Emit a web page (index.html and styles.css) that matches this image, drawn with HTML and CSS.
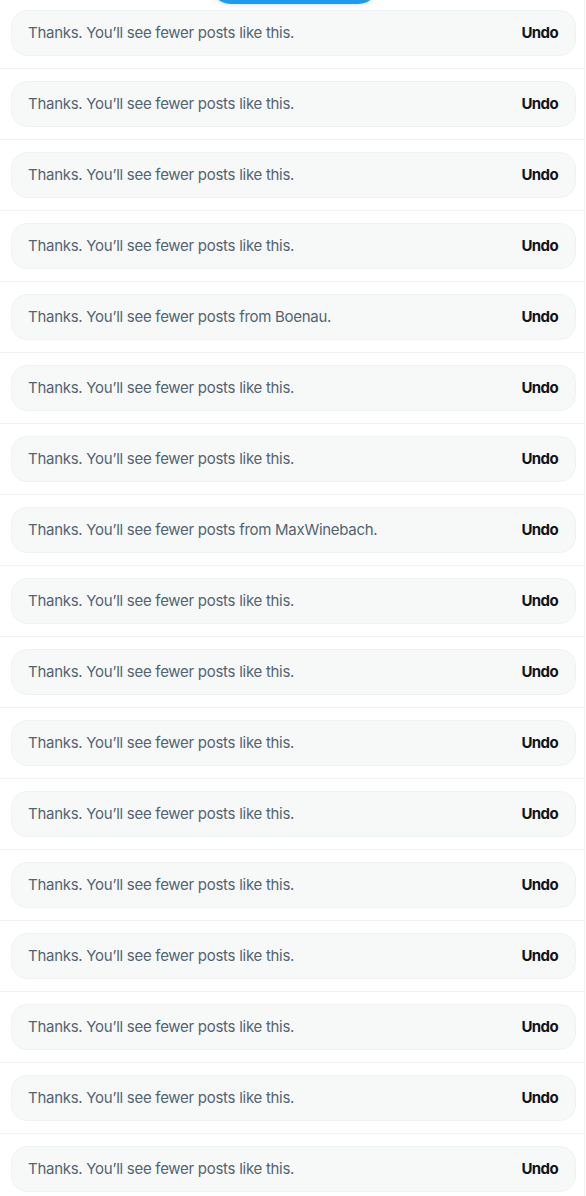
FILE: index.html
```html
<!DOCTYPE html>
<html lang="en">
<head>
<meta charset="utf-8">
<title>Timeline</title>
<link rel="stylesheet" href="styles.css">
</head>
<body>
<div class="pill" aria-label="Show new posts"></div>
<main class="timeline">
  <div class="row"><div class="notice"><span class="msg">Thanks. You’ll see fewer posts like this.</span><button class="undo">Undo</button></div></div>
  <div class="row"><div class="notice"><span class="msg">Thanks. You’ll see fewer posts like this.</span><button class="undo">Undo</button></div></div>
  <div class="row"><div class="notice"><span class="msg">Thanks. You’ll see fewer posts like this.</span><button class="undo">Undo</button></div></div>
  <div class="row"><div class="notice"><span class="msg">Thanks. You’ll see fewer posts like this.</span><button class="undo">Undo</button></div></div>
  <div class="row"><div class="notice"><span class="msg">Thanks. You’ll see fewer posts from Boenau.</span><button class="undo">Undo</button></div></div>
  <div class="row"><div class="notice"><span class="msg">Thanks. You’ll see fewer posts like this.</span><button class="undo">Undo</button></div></div>
  <div class="row"><div class="notice"><span class="msg">Thanks. You’ll see fewer posts like this.</span><button class="undo">Undo</button></div></div>
  <div class="row"><div class="notice"><span class="msg">Thanks. You’ll see fewer posts from MaxWinebach.</span><button class="undo">Undo</button></div></div>
  <div class="row"><div class="notice"><span class="msg">Thanks. You’ll see fewer posts like this.</span><button class="undo">Undo</button></div></div>
  <div class="row"><div class="notice"><span class="msg">Thanks. You’ll see fewer posts like this.</span><button class="undo">Undo</button></div></div>
  <div class="row"><div class="notice"><span class="msg">Thanks. You’ll see fewer posts like this.</span><button class="undo">Undo</button></div></div>
  <div class="row"><div class="notice"><span class="msg">Thanks. You’ll see fewer posts like this.</span><button class="undo">Undo</button></div></div>
  <div class="row"><div class="notice"><span class="msg">Thanks. You’ll see fewer posts like this.</span><button class="undo">Undo</button></div></div>
  <div class="row"><div class="notice"><span class="msg">Thanks. You’ll see fewer posts like this.</span><button class="undo">Undo</button></div></div>
  <div class="row"><div class="notice"><span class="msg">Thanks. You’ll see fewer posts like this.</span><button class="undo">Undo</button></div></div>
  <div class="row"><div class="notice"><span class="msg">Thanks. You’ll see fewer posts like this.</span><button class="undo">Undo</button></div></div>
  <div class="row"><div class="notice"><span class="msg">Thanks. You’ll see fewer posts like this.</span><button class="undo">Undo</button></div></div>
</main>
</body>
</html>
```

FILE: styles.css
```css
html, body {
  margin: 0;
  padding: 0;
  background: #ffffff;
  font-family: Inter, "Liberation Sans", Arial, sans-serif;
  overflow: hidden;
}

.timeline {
  width: 585px;
  margin-top: -2px;
  border-right: 1px solid #eff3f4;
  box-sizing: border-box;
}

.row {
  padding: 12px 8px 12px 11px;
  border-bottom: 1px solid #eff3f4;
}

.notice {
  display: flex;
  align-items: center;
  justify-content: space-between;
  height: 46px;
  box-sizing: border-box;
  padding: 0 17px 0 16px;
  background: #f7f9f9;
  border: 1px solid #eff3f4;
  border-radius: 16px;
}

.msg {
  font-size: 15px;
  letter-spacing: -0.28px;
  color: #536471;
  line-height: 20px;
}

.undo {
  font-family: inherit;
  font-size: 15px;
  font-weight: 700;
  letter-spacing: -0.6px;
  color: #0f1419;
  background: none;
  border: 0;
  padding: 0;
  line-height: 20px;
}

.pill {
  position: fixed;
  top: -40px;
  left: 209px;
  width: 171px;
  height: 44px;
  border-radius: 22px;
  background: #1d9bf0;
  box-shadow: 0 0 5px rgba(101, 119, 134, 0.3);
  z-index: 5;
}
```
